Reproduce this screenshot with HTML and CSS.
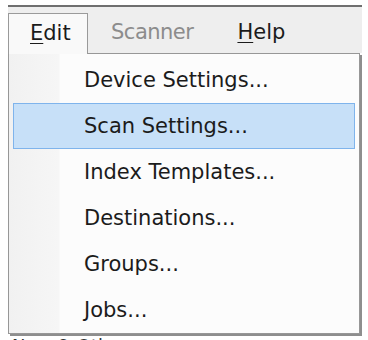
FILE: index.html
```html
<!DOCTYPE html>
<html>
<head>
<meta charset="utf-8">
<link rel="stylesheet" href="styles.css">
</head>
<body>
<div class="window">
  <div class="menubar">
    <div class="menu-item open"><u>E</u>dit</div>
    <div class="menu-item disabled">Scanner</div>
    <div class="menu-item"><u>H</u>elp</div>
  </div>
  <div class="content">
    <div class="content-line">New &amp; Other</div>
  </div>
  <ul class="dropdown">
    <li class="entry">Device Settings...</li>
    <li class="entry hot">Scan Settings...</li>
    <li class="entry">Index Templates...</li>
    <li class="entry">Destinations...</li>
    <li class="entry">Groups...</li>
    <li class="entry">Jobs...</li>
  </ul>
</div>
</body>
</html>
```
FILE: styles.css
```css
html, body {
  margin: 0;
  padding: 0;
  background: #ffffff;
  overflow: hidden;
}
body {
  width: 368px;
  height: 340px;
  font-family: "DejaVu Sans", "Open Sans", sans-serif;
  font-size: 21px;
  color: #1b1b1b;
}
.window {
  position: relative;
  margin: 5px 0 0 8px;
  width: 354px;
  height: 335px;
  overflow: hidden;
}
.menubar {
  display: flex;
  align-items: flex-end;
  height: 46px;
  border-top: 2px solid #6f6f6f;
  background: #eeeeee;
}
.menu-item {
  height: 40px;
  line-height: 38px;
  padding: 0 22px;
  box-sizing: border-box;
  white-space: nowrap;
}
.menu-item u {
  text-decoration-thickness: 1px;
  text-underline-offset: 3px;
}
.menu-item.open {
  position: relative;
  z-index: 2;
  width: 80px;
  height: 41px;
  margin-bottom: -1px;
  padding: 0 0 0 21px;
  border: 1px solid #9a9a9a;
  border-bottom: none;
  background: #f9f9f9;
}
.menu-item.disabled {
  color: #8c8c8c;
  padding-left: 23px;
  padding-right: 22px;
  letter-spacing: -0.5px;
}
.content {
  padding: 0 4px;
}
.content-line {
  padding-top: 283px;
  line-height: 20px;
  color: #333;
  font-size: 18px;
}
.dropdown {
  position: absolute;
  z-index: 1;
  top: 48px;
  left: 0;
  width: 352px;
  box-sizing: border-box;
  margin: 0;
  padding: 3px 4px 0 4px;
  list-style: none;
  border: 1px solid #979797;
  background: linear-gradient(to right, #f1f1f1 0, #f6f6f6 50px, #fcfcfc 51px);
  box-shadow: 2px 2px 0 #8e8e8e;
}
.entry {
  height: 46px;
  line-height: 44px;
  padding-left: 70px;
  border: 1px solid transparent;
  box-sizing: border-box;
  white-space: nowrap;
}
.entry.hot {
  background: #c7e0f8;
  border-color: #7fb4ec;
}
```
